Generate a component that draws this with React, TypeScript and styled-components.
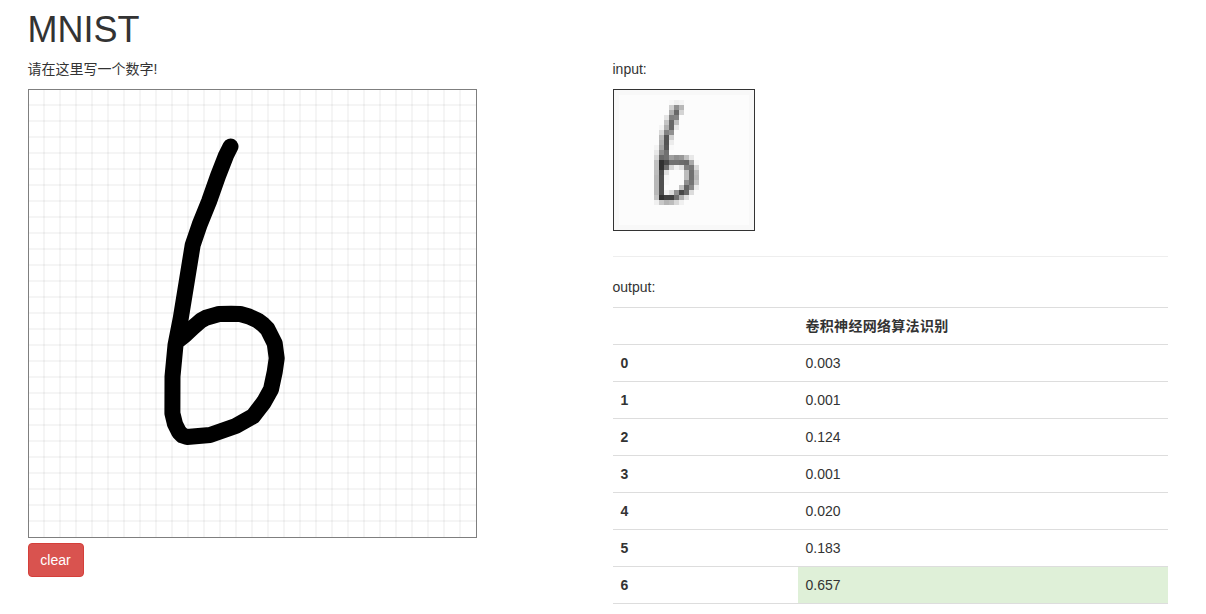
import React from 'react';
import styled, { createGlobalStyle } from 'styled-components';

const GlobalStyle = createGlobalStyle`
  *, *::before, *::after { box-sizing: border-box; }
  html, body { margin: 0; background: #fff; overflow: hidden; }
  body {
    font-family: "Liberation Sans", Arial, "Noto Sans CJK SC", sans-serif;
    font-size: 14px;
    line-height: 20px;
    color: #333;
  }
`;

const Container = styled.main`
  width: 1170px;
  margin-left: 12.5px;
  padding: 10px 0 0;
`;

const Title = styled.h1`
  margin: 0;
  padding: 0 15px;
  height: 49px;
  font-size: 36px;
  font-weight: 500;
  line-height: 40px;
`;

const Columns = styled.div`
  display: grid;
  grid-template-columns: 585px 585px;
`;

const Column = styled.section`
  padding: 0 15px;
`;

const Caption = styled.p`
  margin: 0 0 10px;
  height: 20px;
  white-space: nowrap;
`;

const Board = styled.svg`
  display: block;
  width: 449px;
  height: 449px;
  margin-bottom: 5px;
`;

const ClearButton = styled.button`
  display: block;
  width: 56px;
  height: 34px;
  padding: 0;
  border: 1px solid #d43f3a;
  border-radius: 4px;
  background: #d9534f;
  color: #fff;
  font: inherit;
  cursor: pointer;
`;

const Preview = styled.svg`
  display: block;
  width: 142px;
  height: 142px;
  border: 1px solid #333;
`;

const Divider = styled.hr`
  margin: 25px 0 20px;
  border: 0;
  border-top: 1px solid #eee;
`;

const Table = styled.table`
  width: 555px;
  table-layout: fixed;
  border-collapse: separate;
  border-spacing: 0;
  border-bottom: 1px solid #ddd;
`;

const HeadCell = styled.th<{ $narrow?: boolean }>`
  width: ${(p) => (p.$narrow ? '185px' : 'auto')};
  height: 37px;
  padding: 8px;
  border-top: 1px solid #ddd;
  text-align: left;
  letter-spacing: 0.3px;
  line-height: 20px;
`;

const DigitCell = styled.th`
  height: 37px;
  padding: 8px;
  border-top: 1px solid #ddd;
  text-align: left;
  line-height: 20px;
`;

const ScoreCell = styled.td<{ $best: boolean }>`
  height: 37px;
  padding: 8px;
  border-top: 1px solid #ddd;
  background: ${(p) => (p.$best ? '#dff0d8' : 'transparent')};
  line-height: 20px;
`;

const scores = ['0.003', '0.001', '0.124', '0.001', '0.020', '0.183', '0.657'];
const best = 6;

const gridSteps = Array.from({ length: 27 }, (_, i) => (i + 1) * 16);

// Pen strokes in board coordinates.
const stem =
  '202.5,57.5 198,66.5 190,87 181,112.5 171.7,135.5 164.7,156 159,191 152.8,229 147.5,256 144.5,287.5 144.4,324.3 147,335 151,343 154.5,346.5 159,348 182,346 207.7,337 225,327.3 236,313 243,300.3 246.7,283 248.7,269.3 246.7,254.3 239.5,240 235,235.5 229.7,231.5 221,227.5 212.3,225 203,224.7 191,225 178,228.7 173,231.5 165.5,238 157,246 150.7,251';

// Sampled brightness: first row, first column, then hex pairs per cell.
const samples: [number, number, string][] = [
  [2, 11, 'f8f0f4'],
  [3, 11, 'd090b8'],
  [4, 11, 'b068d4'],
  [5, 10, 'e48084'],
  [6, 10, 'c468c0'],
  [7, 9, 'f4b068e8'],
  [8, 9, 'd88090'],
  [9, 9, 'b854d0'],
  [10, 9, 'b054ec'],
  [11, 8, 'f4a458f9'],
  [12, 8, 'e88c70'],
  [13, 8, 'd86870a09098c0e8'],
  [14, 8, 'c0304870706c68a8f8'],
  [15, 8, 'c03070d4f0e08078d8'],
  [16, 8, 'bc4ce0fcfcfcbc70bc'],
  [17, 8, 'b850f6fcfcfcbc70b8'],
  [18, 8, 'b850f8fcfcfc9074c4'],
  [19, 8, 'b850fcfcfcc46488ec'],
  [20, 8, 'b850f0dc904868dc'],
  [21, 8, 'c430404070b0e0'],
  [22, 8, 'f0c8b4bcd8f0'],
];

const cells = samples.flatMap(([row, col, values]) =>
  (values.match(/../g) ?? []).map((v, i) => ({ row, col: col + i, fill: `#${v}${v}${v}` })),
);

export default function App() {
  return (
    <>
      <GlobalStyle />
      <Container>
        <Title>MNIST</Title>
        <Columns>
          <Column>
            <Caption>请在这里写一个数字!</Caption>
            <Board viewBox="0 0 449 449">
              {gridSteps.map((p) => (
                <g key={p} stroke="#000" strokeOpacity="0.04" strokeWidth="2">
                  <path d={`M${p} 0V449`} />
                  <path d={`M0 ${p}H449`} />
                </g>
              ))}
              <rect x="0.5" y="0.5" width="448" height="448" fill="none" stroke="#7f7f7f" />
              <polyline
                points={stem}
                fill="none"
                stroke="#000"
                strokeWidth="16"
                strokeLinecap="round"
                strokeLinejoin="round"
              />
            </Board>
            <ClearButton>clear</ClearButton>
          </Column>
          <Column>
            <Caption>input:</Caption>
            <Preview viewBox="0 0 28 28" shapeRendering="crispEdges">
              <rect width="28" height="28" fill="#f8f8f8" />
              <rect x="1" y="1" width="26" height="26" fill="#fcfcfc" />
              {cells.map((c) => (
                <rect key={`${c.row}-${c.col}`} x={c.col} y={c.row} width="1" height="1" fill={c.fill} />
              ))}
            </Preview>
            <Divider />
            <Caption>output:</Caption>
            <Table>
              <thead>
                <tr>
                  <HeadCell $narrow />
                  <HeadCell>卷积神经网络算法识别</HeadCell>
                </tr>
              </thead>
              <tbody>
                {scores.map((score, digit) => (
                  <tr key={digit}>
                    <DigitCell>{digit}</DigitCell>
                    <ScoreCell $best={digit === best}>{score}</ScoreCell>
                  </tr>
                ))}
              </tbody>
            </Table>
          </Column>
        </Columns>
      </Container>
    </>
  );
}
